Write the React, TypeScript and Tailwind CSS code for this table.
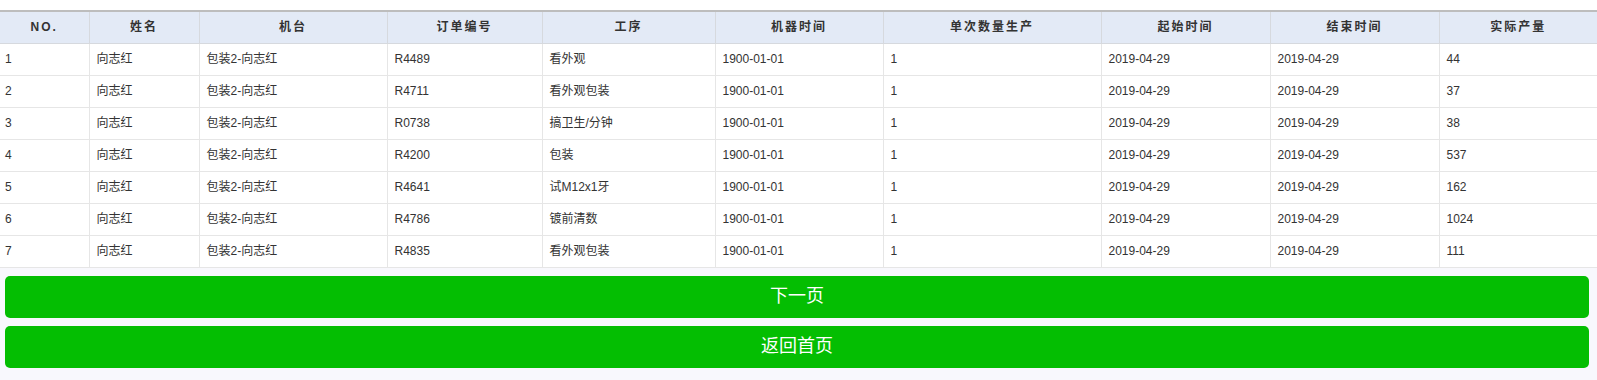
import React from 'react';

const cols = [89, 110, 188, 155, 173, 168, 218, 169, 169, 158];
const heads = ['NO.', '姓名', '机台', '订单编号', '工序', '机器时间', '单次数量生产', '起始时间', '结束时间', '实际产量'];

const rows = [
  ['1', 'R4489', '看外观', '44'],
  ['2', 'R4711', '看外观包装', '37'],
  ['3', 'R0738', '搞卫生/分钟', '38'],
  ['4', 'R4200', '包装', '537'],
  ['5', 'R4641', '试M12x1牙', '162'],
  ['6', 'R4786', '镀前清数', '1024'],
  ['7', 'R4835', '看外观包装', '111'],
];

export default function App() {
  return (
    <div
      className="min-h-[380px] w-[1597px] bg-[#f8f8fd] text-[#333]"
      style={{ fontFamily: '"Liberation Sans", "Noto Sans CJK SC", sans-serif' }}
    >
      <div className="h-[10px] bg-white" />
      <table className="w-full table-fixed border-collapse bg-white text-[12px]">
        <colgroup>
          {cols.map((w, i) => (
            <col key={i} style={{ width: w }} />
          ))}
        </colgroup>
        <thead>
          <tr className="h-[32px] border-t-2 border-[#bdbdbd] bg-[#e3eaf6]">
            {heads.map((h, i) => (
              <th
                key={i}
                className="border-x border-b border-[#d6d9de] text-center font-bold tracking-[2px] first:border-l-0 last:border-r-0"
              >
                {h}
              </th>
            ))}
          </tr>
        </thead>
        <tbody>
          {rows.map((r) => {
            const cells = [r[0], '向志红', '包装2-向志红', r[1], r[2], '1900-01-01', '1', '2019-04-29', '2019-04-29', r[3]];
            return (
              <tr key={r[0]} className="h-[32px]">
                {cells.map((c, i) => (
                  <td
                    key={i}
                    className="border border-[#e6e6e6] px-[7px] first:border-l-0 first:pl-[5px] last:border-r-0"
                  >
                    {c}
                  </td>
                ))}
              </tr>
            );
          })}
        </tbody>
      </table>
      <div className="ml-[5px] mr-[8px] mt-[8px] flex flex-col gap-[8px]">
        <button className="h-[42px] w-full rounded-[5px] bg-[#04be02] text-[18px] text-white">下一页</button>
        <button className="h-[42px] w-full rounded-[5px] bg-[#04be02] text-[18px] text-white">返回首页</button>
      </div>
    </div>
  );
}
